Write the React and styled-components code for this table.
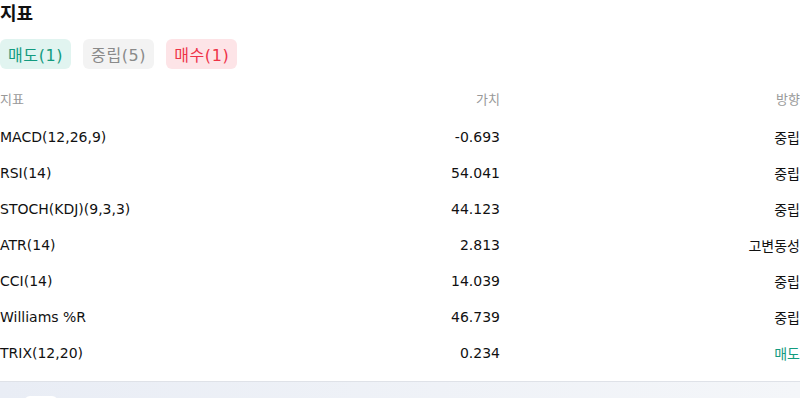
import React from "react";
import styled, { createGlobalStyle } from "styled-components";

const Global = createGlobalStyle`
  html, body { margin: 0; padding: 0; background: #fff; }
  body { font-family: "DejaVu Sans", "Noto Sans CJK KR", sans-serif; color: #111; }
`;

const Page = styled.div`
  width: 800px;
  height: 398px;
  overflow: hidden;
  display: flex;
  flex-direction: column;
`;

const Section = styled.section`
  display: flex;
  flex-direction: column;
  padding-bottom: 10px;
`;

const Title = styled.h2`
  margin: 0;
  height: 30px;
  line-height: 30px;
  margin-top: -1px;
  font-size: 18px;
  font-weight: 700;
  color: #111;
`;

const Filters = styled.div`
  display: flex;
  gap: 12px;
  margin-top: 10px;
`;

const tones = {
  sell: { bg: "#e1f4f0", fg: "#139b7f" },
  neutral: { bg: "#f3f3f3", fg: "#8a8a8a" },
  buy: { bg: "#fde4e7", fg: "#ee3347" },
};

const Chip = styled.button`
  font: inherit;
  font-size: 16px;
  letter-spacing: 0.6px;
  border: none;
  height: 30px;
  padding: 0 8px;
  border-radius: 6px;
  background: ${(p) => tones[p.$tone].bg};
  color: ${(p) => tones[p.$tone].fg};
  cursor: pointer;
`;

const Table = styled.div`
  display: flex;
  flex-direction: column;
  margin-top: 11px;
`;

const Row = styled.div`
  display: grid;
  grid-template-columns: 3fr 2fr 3fr;
  height: 36px;
  align-items: center;
  margin-bottom: ${(p) => (p.$head ? "3px" : "0")};
  font-size: ${(p) => (p.$head ? "13px" : "14px")};
  color: ${(p) => (p.$head ? "#999" : "#111")};
`;

const Cell = styled.div`
  text-align: ${(p) => (p.$right ? "right" : "left")};
  white-space: nowrap;
`;

const dirColors = { 매도: "#139b7f", 매수: "#ee3347" };

const Direction = styled(Cell)`
  color: ${(p) => p.$color || "inherit"};
`;

const Footer = styled.div`
  flex: 1;
  border-top: 1px solid #dfe2e8;
  background: linear-gradient(90deg, #e9edf5, #f4f6f9);
  padding: 14px 24px 0;
`;

const MiniCard = styled.div`
  width: 34px;
  height: 20px;
  background: #fff;
  border-radius: 6px;
`;

const rows = [
  ["MACD(12,26,9)", "-0.693", "중립"],
  ["RSI(14)", "54.041", "중립"],
  ["STOCH(KDJ)(9,3,3)", "44.123", "중립"],
  ["ATR(14)", "2.813", "고변동성"],
  ["CCI(14)", "14.039", "중립"],
  ["Williams %R", "46.739", "중립"],
  ["TRIX(12,20)", "0.234", "매도"],
];

export default function App() {
  return (
    <Page>
      <Global />
      <Section>
        <Title>지표</Title>
        <Filters>
          <Chip $tone="sell">매도(1)</Chip>
          <Chip $tone="neutral">중립(5)</Chip>
          <Chip $tone="buy">매수(1)</Chip>
        </Filters>
        <Table>
          <Row $head>
            <Cell>지표</Cell>
            <Cell $right>가치</Cell>
            <Cell $right>방향</Cell>
          </Row>
          {rows.map(([name, value, dir]) => (
            <Row key={name}>
              <Cell>{name}</Cell>
              <Cell $right>{value}</Cell>
              <Direction $right $color={dirColors[dir]}>{dir}</Direction>
            </Row>
          ))}
        </Table>
      </Section>
      <Footer>
        <MiniCard />
      </Footer>
    </Page>
  );
}
